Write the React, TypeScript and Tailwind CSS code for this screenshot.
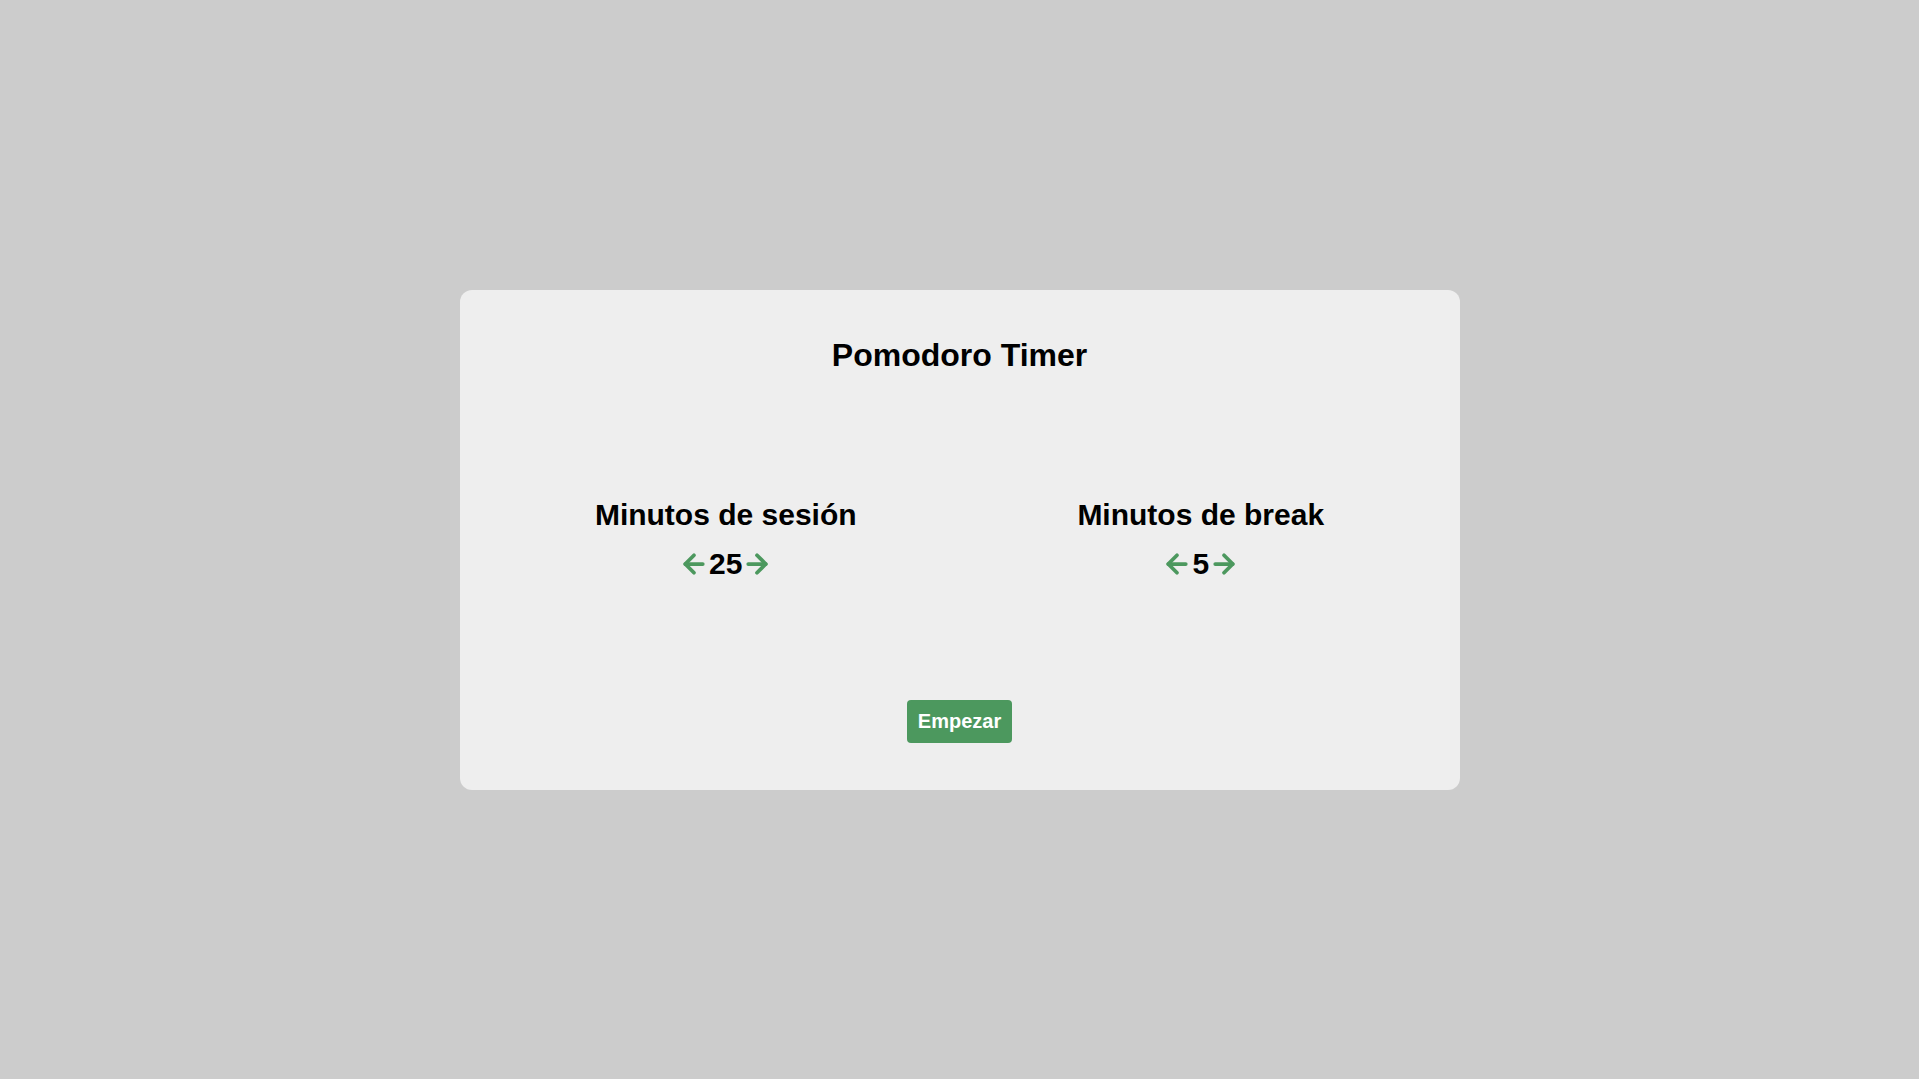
import { useState } from "react";
import { ArrowLeft, ArrowRight } from "lucide-react";

type CounterProps = {
  label: string;
  value: number;
  onChange: (v: number) => void;
};

const Counter = ({ label, value, onChange }: CounterProps) => {
  return (
    <div className="flex flex-col items-center">
      <h2 className="text-[30px] leading-[34px] font-bold text-black">{label}</h2>
      <div className="mt-[15px] flex items-center h-[34px]">
        <button type="button" className="text-[#4c985e] cursor-pointer" onClick={() => onChange(Math.max(1, value - 1))}>
          <ArrowLeft size={30} strokeWidth={3} />
        </button>
        <span className="text-[30px] leading-[34px] font-bold text-black">{value}</span>
        <button type="button" className="text-[#4c985e] cursor-pointer" onClick={() => onChange(value + 1)}>
          <ArrowRight size={30} strokeWidth={3} />
        </button>
      </div>
    </div>
  );
};

export default function App() {
  const [session, setSession] = useState(25);
  const [pause, setPause] = useState(5);

  return (
    <div className="min-h-screen w-full bg-[#cccccc] flex items-center justify-center font-['Liberation_Sans',Arial,sans-serif]">
      <div className="w-[1000px] bg-[#eeeeee] rounded-[12px] pt-[47px] pb-[47px] flex flex-col items-center">
        <h1 className="text-[32px] leading-[36px] font-bold text-black">Pomodoro Timer</h1>

        <div className="mt-[125px] w-full px-[25px] flex justify-around">
          <Counter label="Minutos de sesión" value={session} onChange={setSession} />
          <Counter label="Minutos de break" value={pause} onChange={setPause} />
        </div>

        <button
          type="button"
          className="mt-[119px] h-[43px] px-[11px] pt-[9px] pb-[9px] rounded-[4px] bg-[#4c985e] text-white text-[20px] leading-[25px] font-bold cursor-pointer"
        >
          Empezar
        </button>
      </div>
    </div>
  );
}
